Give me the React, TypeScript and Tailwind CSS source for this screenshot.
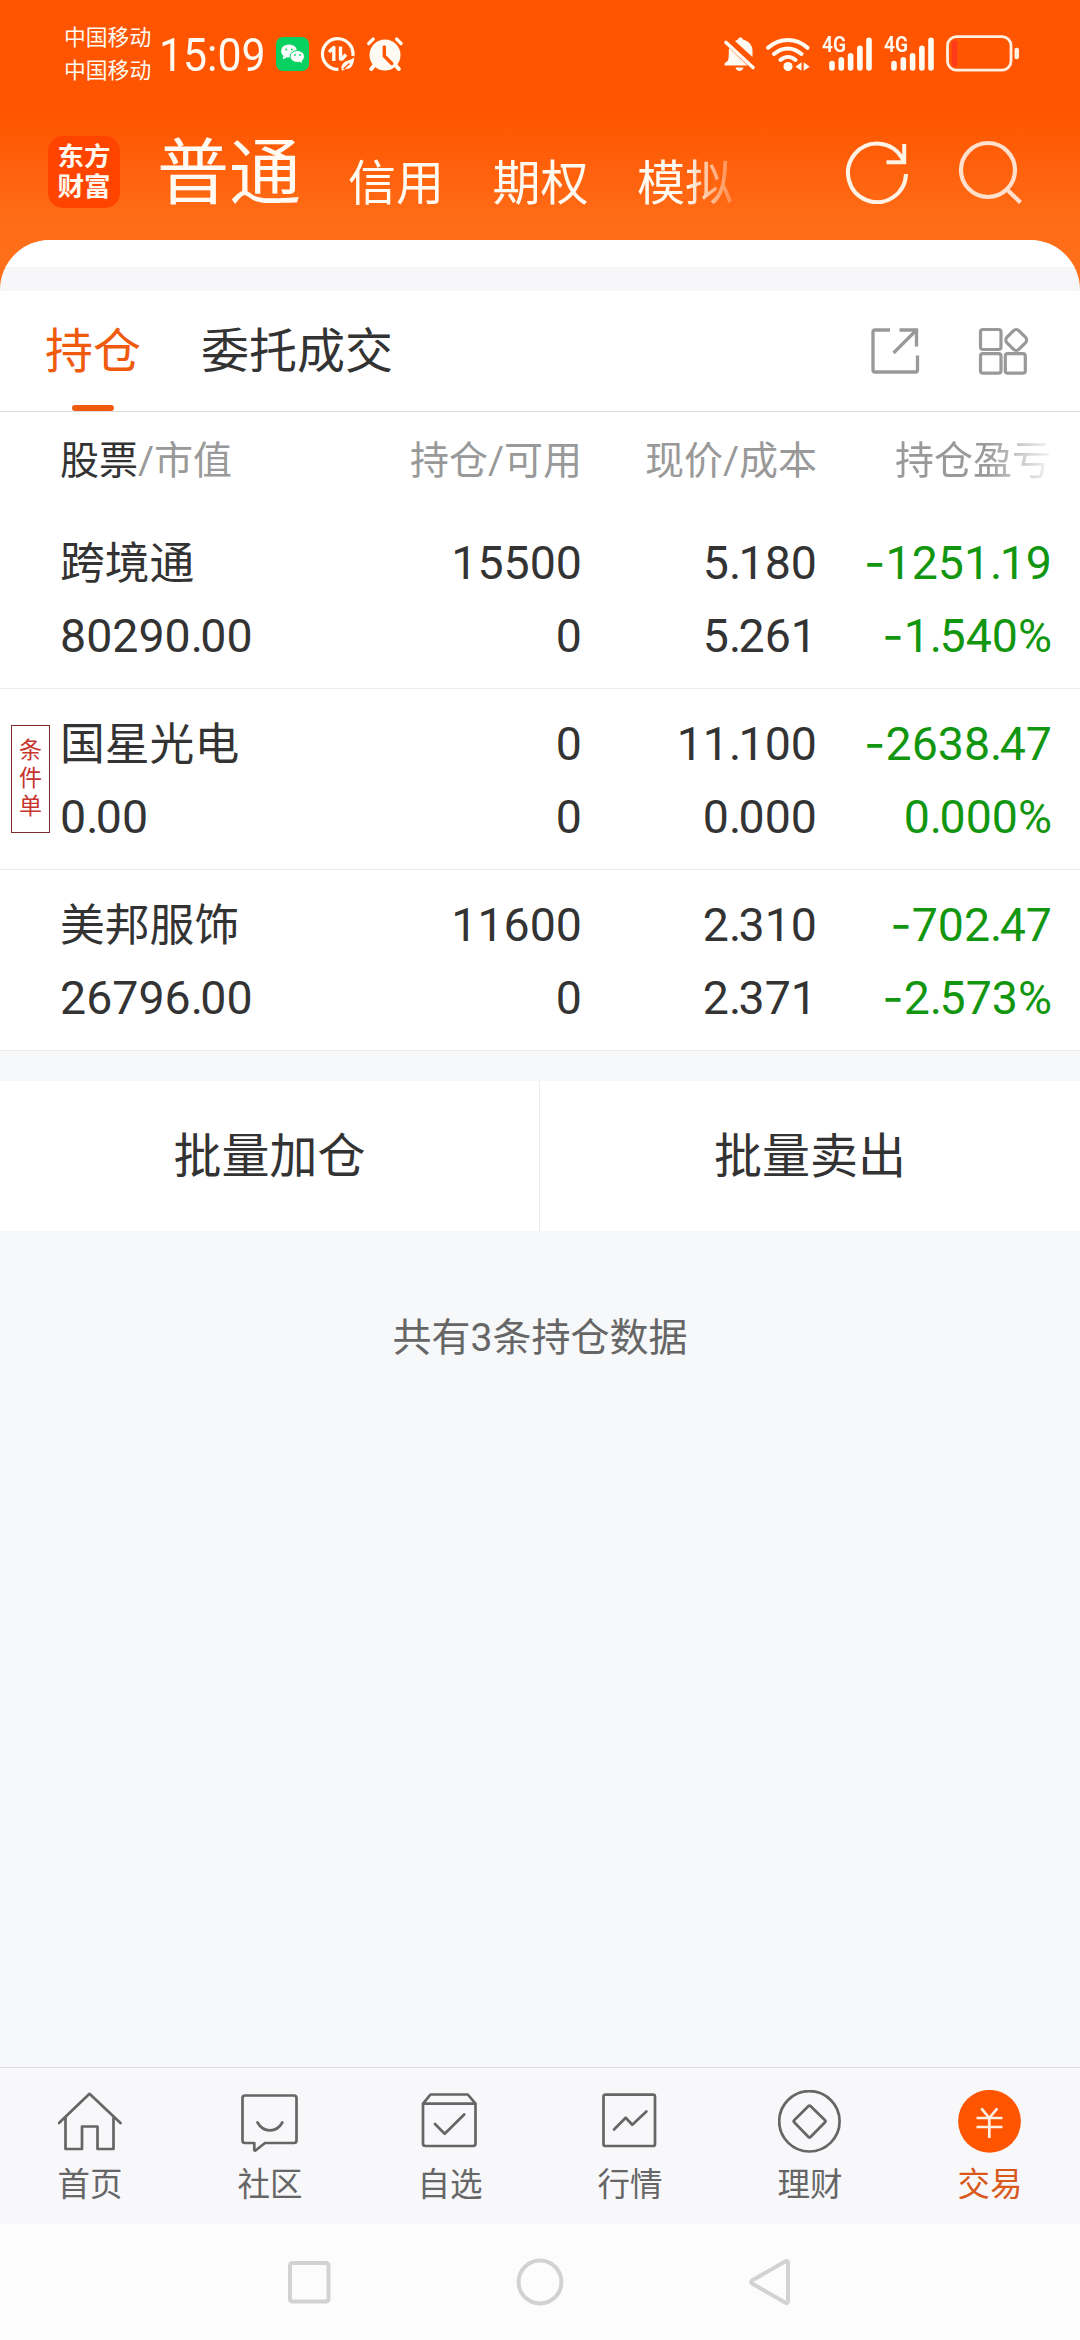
import type { ReactNode } from 'react';

type Holding = {
  name: string;
  value: string;
  qty: string;
  available: string;
  price: string;
  cost: string;
  profit: string;
  rate: string;
  flagged?: boolean;
};

const holdings: Holding[] = [
  { name: '跨境通', value: '80290.00', qty: '15500', available: '0', price: '5.180', cost: '5.261', profit: '-1251.19', rate: '-1.540%' },
  { name: '国星光电', value: '0.00', qty: '0', available: '0', price: '11.100', cost: '0.000', profit: '-2638.47', rate: '0.000%', flagged: true },
  { name: '美邦服饰', value: '26796.00', qty: '11600', available: '0', price: '2.310', cost: '2.371', profit: '-702.47', rate: '-2.573%' },
];

/* Figures with a tight decimal point and a wide minus sign. */
function Num({ children }: { children: string }) {
  const negative = children.startsWith('-');
  const [whole, fraction] = (negative ? children.slice(1) : children).split('.');
  return (
    <div className="h-[73px] text-[46.5px] leading-[73px] whitespace-nowrap">
      {negative && <span className="inline-block h-[70px] align-top font-['Inter'] leading-[71px]">-</span>}
      {whole}
      {fraction !== undefined && <span className="tracking-[-2.6px]">.</span>}
      {fraction}
    </div>
  );
}

function Signal() {
  return (
    <div className="relative h-[34px] w-[50px]">
      <span className="absolute -top-[3px] left-0 origin-left scale-x-[0.87] text-[22px] leading-[22px] font-semibold">4G</span>
      <svg className="absolute inset-0" width="50" height="34" viewBox="821 36.5 50 34" stroke="#fffaf2" strokeWidth="5.6" strokeLinecap="round">
        <path d="M831 63v4.5M840.3 59.3v8.2M849.6 55.3v12.2M858.9 47.7v19.8M868 39.7v27.8" />
      </svg>
    </div>
  );
}

function StatusBar() {
  return (
    <div className="flex h-[108px] items-center pr-[60px] pl-[64px] text-[#fffaf2]">
      <div className="w-[95px] text-[21.8px] leading-[33px]">
        <div>中国移动</div>
        <div>中国移动</div>
      </div>
      <div className="w-[117px] origin-left scale-x-[0.93] pt-[2px] text-[46px] leading-[60px]">15:09</div>
      <svg width="33" height="34" viewBox="276 36.5 33 34">
        <rect x="276" y="36.5" width="33" height="34" rx="7" fill="#07d160" />
        <ellipse cx="289" cy="50.5" rx="8" ry="6.6" fill="#fff" />
        <path d="M283.5 55l-.8 4 4-2z" fill="#fff" />
        <ellipse cx="297.3" cy="56" rx="7.2" ry="6" fill="#fff" stroke="#07d160" strokeWidth="1" />
        <path d="M299 60.5l3 2.2-.4-4z" fill="#fff" />
        <g fill="#07d160">
          <circle cx="286.3" cy="49" r="1" /><circle cx="291.8" cy="49" r="1" />
          <circle cx="295" cy="54.5" r=".9" /><circle cx="300" cy="54.5" r=".9" />
        </g>
      </svg>
      <svg className="ml-[11px]" width="35" height="34" viewBox="319.5 36.5 35 34" fill="none" stroke="#fffaf2" strokeWidth="3.2">
        <path d="M352.4 55.5a15.300 15.300 0 1 0-14.500 13.300" />
        <path d="M328.500 51.500l4.800-4.500V60.500M340 46v12.500h1.500l4-4.500" strokeLinejoin="round" strokeWidth="3.400" />
        <path d="M353.800 57c-.6 8-3.500 12-8.500 11.300l-3.300 2-1-1.500c-.5-4 1.500-6.800 5.300-8.300 3-1.200 5.500-1.800 7.500-3.500z" fill="#fffaf2" stroke="none" />
        <path d="M343 68.500l6-5.500" stroke="#ff5500" strokeWidth="1.300" />
      </svg>
      <svg className="ml-[11.500px]" width="36" height="34" viewBox="366 36.500 36 34" fill="none" stroke="#fffaf2" strokeLinecap="round">
        <circle cx="384" cy="54.500" r="15.500" fill="#fffaf2" stroke="none" />
        <path d="M367.700 43l4.500-4.500M400.100 43l-4.500-4.500" strokeWidth="3.200" />
        <path d="M374 64l-3.800 4.500M394 64l3.800 4.500" strokeWidth="4" />
        <path d="M383.300 46.500v9l7.500 7.500" stroke="#ff5500" strokeWidth="3.400" />
      </svg>
      <div className="flex-1" />
      <svg width="31" height="34" viewBox="722.500 36.500 31 34" fill="#fffaf2">
        <path d="M733.500 40.500l3-1.500c.8-2.600 4.200-2.600 5 0 6 1.500 9.500 6 9.500 11v6.500z" />
        <path d="M727.500 47.500L746 65h-23v-2l3.500-3c1.200-4 .5-8 1-12.500z" />
        <path d="M734 67h8c-.8 4.500-7.200 4.500-8 0z" />
        <path d="M724.500 42l27 25" stroke="#fffaf2" strokeWidth="3.600" strokeLinecap="round" />
      </svg>
      <svg className="ml-[11.500px]" width="44" height="34" viewBox="765 36.500 44 34" fill="none" stroke="#fffaf2" strokeWidth="4" strokeLinecap="round">
        <path d="M767 47.300c12-10.500 28-10.500 39.500 0M773 53.500c8.500-7.500 19-7.500 27.500 0M779.500 59.500c4.500-4 10.500-4 15 0" />
        <circle cx="787" cy="66" r="4.600" fill="#fffaf2" stroke="none" />
        <path d="M794.500 66.300l6-4.500v8.500zM808.700 66.300l-6-4.500v8.500z" fill="#fffaf2" stroke="none" />
      </svg>
      <div className="ml-[12px] flex gap-[12px]">
        <Signal />
        <Signal />
      </div>
      <svg className="ml-[12px]" width="74" height="38" viewBox="945 35 74 38" fill="none">
        <rect x="946.500" y="36.700" width="63.500" height="33.500" rx="9" stroke="#fff0e0" strokeWidth="2.800" />
        <rect x="950.700" y="40.500" width="5.500" height="26" rx="2.500" fill="#ff3a1c" />
        <rect x="1013.500" y="47.700" width="4.500" height="11.500" rx="2" fill="#fff0e0" />
      </svg>
    </div>
  );
}

function TitleBar() {
  return (
    <div className="flex h-[132px] items-center pr-[56px] pb-[4px] pl-[48px] text-[#fffaf2]">
      <div className="flex h-[72px] w-[72px] flex-col items-center justify-center rounded-[15px] bg-[#ff4400] text-[26.500px] leading-[30px] font-bold text-[#fff8ee]">
        <span>东方</span>
        <span>财富</span>
      </div>
      <div className="ml-[37px] pt-[3px] text-[72px] leading-[72px]">普通</div>
      <div className="ml-[47px] flex w-[384px] gap-[48.500px] [mask-image:linear-gradient(to_right,black_338px,transparent_400px)] pt-[24px] text-[48px] leading-[60px] whitespace-nowrap">
        <span>信用</span>
        <span>期权</span>
        <span>模拟</span>
      </div>
      <div className="flex-1" />
      <svg width="64" height="64" viewBox="844 140 64 64" fill="none" stroke="#fff3e6" strokeWidth="4">
        <path d="M905 174a29 29.300 0 1 1-4-16l2.500 4.500" />
        <path d="M885.500 162.300h17.700V144" />
      </svg>
      <svg className="ml-[49px]" width="66" height="64" viewBox="957 139 66 64" fill="none" stroke="#ffe0cc" strokeWidth="4.200">
        <circle cx="987" cy="169" r="27" />
        <path d="M1006 188.500l13.500 13" />
      </svg>
    </div>
  );
}

function Tabs() {
  return (
    <div className="flex h-[121px] items-stretch border-b border-[#dcdcdc] bg-white pr-[50px] pl-[45px] text-[48px] leading-[122px]">
      <div className="relative text-[#ef5a0f]">
        持仓
        <span className="absolute bottom-0 left-[27px] h-[6px] w-[42px] rounded-full bg-[#ef5a0f]" />
      </div>
      <div className="ml-[60px] text-[#333]">委托成交</div>
      <div className="flex-1" />
      <div className="flex items-center gap-[58px]">
        <svg width="50" height="50" viewBox="869 326 50 50" fill="none" stroke="#999" strokeWidth="3.300">
          <path d="M889 330H874q-2 0-2 2v38q0 2 2 2h40.500q2 0 2-2V355.500" />
          <path d="M898.500 330h17v16.500M892.500 353l22.500-22.500" />
        </svg>
        <svg width="52" height="50" viewBox="977 327 52 50" fill="none" stroke="#999" strokeWidth="3.200">
          <rect x="979.500" y="330.500" width="20.500" height="20" rx="2.500" />
          <rect x="979.500" y="354.700" width="20.500" height="19.500" rx="2.500" />
          <rect x="1004.300" y="354.700" width="20" height="19.500" rx="2.500" />
          <rect x="1006.700" y="332.500" width="17" height="17" rx="4" transform="rotate(45 1015.200 341)" />
        </svg>
      </div>
    </div>
  );
}

const columns = 'grid grid-cols-[331px_191px_235px_235px] pl-[60px]';

function TableHead() {
  return (
    <div className={columns + ' h-[96px] bg-white text-[39px] leading-[98px] whitespace-nowrap text-[#999]'}>
      <div><span className="text-[#333]">股票</span>/市值</div>
      <div className="text-right">持仓/可用</div>
      <div className="text-right">现价/成本</div>
      <div className="pr-px text-right [mask-image:linear-gradient(to_right,black_170px,transparent_240px)]">持仓盈亏</div>
    </div>
  );
}

function Row({ h }: { h: Holding }) {
  return (
    <div className={columns + ' relative h-[181px] border-b border-[#ebebeb] bg-white pt-[19px] text-[#333]'}>
      {h.flagged && (
        <div className="absolute top-[36px] left-[11px] flex h-[108px] w-[39px] flex-col items-center justify-center border border-[#7d2b2b] text-[23px] leading-[28px] text-[#c8342e]">
          <span>条</span>
          <span>件</span>
          <span>单</span>
        </div>
      )}
      <div>
        <div className="h-[73px] text-[44.800px] leading-[73px] whitespace-nowrap">{h.name}</div>
        <Num>{h.value}</Num>
      </div>
      <div className="text-right"><Num>{h.qty}</Num><Num>{h.available}</Num></div>
      <div className="text-right"><Num>{h.price}</Num><Num>{h.cost}</Num></div>
      <div className="text-right text-[#12960f]"><Num>{h.profit}</Num><Num>{h.rate}</Num></div>
    </div>
  );
}

function NavItem({ label, active, children }: { label: string; active?: boolean; children: ReactNode }) {
  return (
    <div className={active ? 'flex flex-col items-center text-[#d9591c]' : 'flex flex-col items-center text-[#666]'}>
      <svg width="64" height="64" viewBox="0 0 64 64" fill="none" stroke="currentColor" strokeWidth="2.700" strokeLinejoin="round" strokeLinecap="round">
        {children}
      </svg>
      <span className="mt-[11px] text-[32.500px] leading-[40px]">{label}</span>
    </div>
  );
}

function BottomNav() {
  return (
    <div className="grid h-[157px] grid-cols-6 border-t border-[#e0e0e2] bg-[#f8f8fb] pt-[22px]">
      <NavItem label="首页">
        <path d="M1 33L31.500 3.800 62.500 33M7.500 27.500V59H24V36.500h15.500V59h16V27.500" />
      </NavItem>
      <NavItem label="社区">
        <path d="M7 5.500h49q2.500 0 2.500 2.500v42.500q0 2.500-2.500 2.500H27l-9.500 7.500q-1.200.5-1.200-1V53H7q-2.500 0-2.500-2.500V8q0-2.500 2.500-2.500z" />
        <path d="M19.500 32.500c6 10.500 19 10.500 24.800 0" />
      </NavItem>
      <NavItem label="自选">
        <path d="M5 13.700h52.500V53.500q0 2.500-2.500 2.500H7.500Q5 56 5 53.500zM5 13.700l7.500-9.200h37.300l7.700 9.200M17 34l9.700 9.800 19.500-19.300" />
      </NavItem>
      <NavItem label="行情">
        <rect x="5.500" y="4.700" width="51.500" height="51.300" rx="2" />
        <path d="M16 39.500l11.700-11.800 6.600 7L48.400 21.500" />
      </NavItem>
      <NavItem label="理财">
        <circle cx="31.400" cy="31.300" r="30.200" />
        <path d="M30.500 16q1-.9 2 0l14.500 14.300q1 1 0 2L32.500 47q-1 .9-2 0L16.200 32.300q-1-1 0-2z" />
      </NavItem>
      <NavItem label="交易" active>
        <circle cx="31.500" cy="31.300" r="31.400" fill="#ff5500" stroke="none" />
        <path d="M18.500 28h26M18.500 37h26M31.300 28v20M23.300 18.300L31.300 28l8-9.700" stroke="#fff0e3" strokeLinecap="butt" />
      </NavItem>
    </div>
  );
}

function SystemBar() {
  return (
    <div className="flex h-[116px] items-center justify-center gap-[185px] bg-[#fcfcfc]">
      <svg width="43" height="43" viewBox="0 0 43 43" fill="none" stroke="#d2d2d2" strokeWidth="4">
        <rect x="2" y="2" width="38.500" height="38.500" rx="2.500" />
      </svg>
      <svg width="48" height="48" viewBox="0 0 48 48" fill="none" stroke="#d2d2d2" strokeWidth="4">
        <circle cx="24" cy="24" r="21.400" />
      </svg>
      <svg width="43" height="48" viewBox="0 0 43 48" fill="none" stroke="#d2d2d2" strokeWidth="4" strokeLinejoin="round">
        <path d="M3 22.500L36.500 3.300q2.500-1 2.500 1.500v38.400q0 2.500-2.500 1.500L3 25.500q-1.800-1.500 0-3z" />
      </svg>
    </div>
  );
}

export default function App() {
  return (
    <div className="flex h-[2340px] w-[1080px] flex-col overflow-hidden bg-[#f6f8fa] font-[Roboto,'Noto_Sans_CJK_SC',sans-serif]">
      <header className="h-[291px] bg-[linear-gradient(#ff5500_0,#ff5500_115px,#ff6c17_220px,#ff701c_291px)]">
        <StatusBar />
        <TitleBar />
        <div className="h-[51px] overflow-hidden rounded-t-[50px] bg-[#f7f7fa]">
          <div className="h-[27px] bg-white" />
        </div>
      </header>
      <Tabs />
      <TableHead />
      {holdings.map((h) => (
        <Row key={h.name} h={h} />
      ))}
      <div className="mt-[30px] grid h-[150px] grid-cols-2 bg-white text-center text-[48px] leading-[152px] text-[#333]">
        <div className="border-r border-[#ededed]">批量加仓</div>
        <div>批量卖出</div>
      </div>
      <div className="mt-[77px] text-center text-[39px] leading-[60px] text-[#666]">共有3条持仓数据</div>
      <div className="flex-1" />
      <BottomNav />
      <SystemBar />
    </div>
  );
}
